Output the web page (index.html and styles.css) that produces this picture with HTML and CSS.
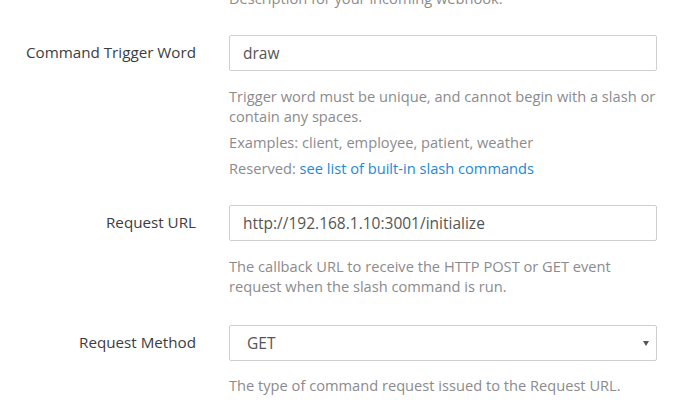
FILE: index.html
```html
<!DOCTYPE html>
<html lang="en">
<head>
  <meta charset="utf-8" />
  <meta name="viewport" content="width=device-width, initial-scale=1" />
  <title>Add Slash Command</title>
  <link rel="stylesheet" href="styles.css">
</head>
<body>
<div class="cmd-form">
  <div class="cmd-row cmd-row--first">
    <div></div>
    <div class="cmd-field">
      <div class="cmd-help cmd-help--top">Description for your incoming webhook.</div>
    </div>
  </div>

  <div class="cmd-row cmd-row--trigger">
    <label class="cmd-label" for="trigger">Command Trigger Word</label>
    <div class="cmd-field">
      <input class="cmd-input" id="trigger" type="text" value="draw" />
      <div class="cmd-help">Trigger word must be unique, and cannot begin with a slash or contain any spaces.</div>
      <div class="cmd-help cmd-help--more">Examples: client, employee, patient, weather</div>
      <div class="cmd-help cmd-help--more">Reserved: <a class="cmd-a" href="#">see list of built-in slash commands</a></div>
    </div>
  </div>

  <div class="cmd-row cmd-row--url">
    <label class="cmd-label" for="url">Request URL</label>
    <div class="cmd-field">
      <input class="cmd-input" id="url" type="text" value="http://192.168.1.10:3001/initialize" />
      <div class="cmd-help">The callback URL to receive the HTTP POST or GET event request when the slash command is run.</div>
    </div>
  </div>

  <div class="cmd-row">
    <label class="cmd-label" for="method">Request Method</label>
    <div class="cmd-field">
      <div class="cmd-select-wrap">
        <select class="cmd-input cmd-select" id="method">
          <option>GET</option>
          <option>POST</option>
        </select>
      </div>
      <div class="cmd-help cmd-help--last">The type of command request issued to the Request URL.</div>
    </div>
  </div>
</div>
</body>
</html>
```

FILE: styles.css
```css
:root {
  --teksti: #3d3c40;
  --apu: #8b8b8d;
  --reuna: #cfcfcf;
  --linkki: #2389d7;
}
html, body {
  margin: 0;
  padding: 0;
  background: #fff;
}
body {
  font-family: "Open Sans", sans-serif;
  font-size: 15px;
  line-height: 20px;
  color: var(--teksti);
}
.cmd-form {
  margin-top: -12px;
}
.cmd-row {
  display: grid;
  grid-template-columns: 196px 428px;
  column-gap: 33px;
  padding-bottom: 26px;
}
.cmd-row--first {
  padding-bottom: 27px;
}
.cmd-row--trigger {
  padding-bottom: 27px;
}
.cmd-row--url {
  padding-bottom: 29px;
}
.cmd-label {
  text-align: right;
  padding-top: 7px;
  font-size: 15.2px;
  white-space: nowrap;
}
.cmd-input {
  display: block;
  box-sizing: border-box;
  width: 100%;
  height: 36px;
  margin: 0;
  padding: 0 13px;
  border: 1px solid var(--reuna);
  border-radius: 2px;
  background: #fff;
  font-family: inherit;
  font-size: 15.5px;
  color: #555;
}
.cmd-input:focus {
  outline: none;
}
.cmd-select-wrap {
  position: relative;
}
.cmd-select {
  appearance: none;
  -webkit-appearance: none;
  padding-left: 17px;
}
.cmd-select-wrap::after {
  content: "";
  position: absolute;
  right: 8px;
  top: 16px;
  border-left: 3px solid transparent;
  border-right: 3px solid transparent;
  border-top: 5px solid #555;
}
.cmd-help {
  margin-top: 15px;
  font-size: 14.65px;
  color: var(--apu);
}
.cmd-help--top {
  margin-top: 0;
}
.cmd-help--more {
  margin-top: 6px;
}
.cmd-help--last {
  margin-top: 14px;
}
.cmd-a {
  color: var(--linkki);
  text-decoration: none;
}
```
